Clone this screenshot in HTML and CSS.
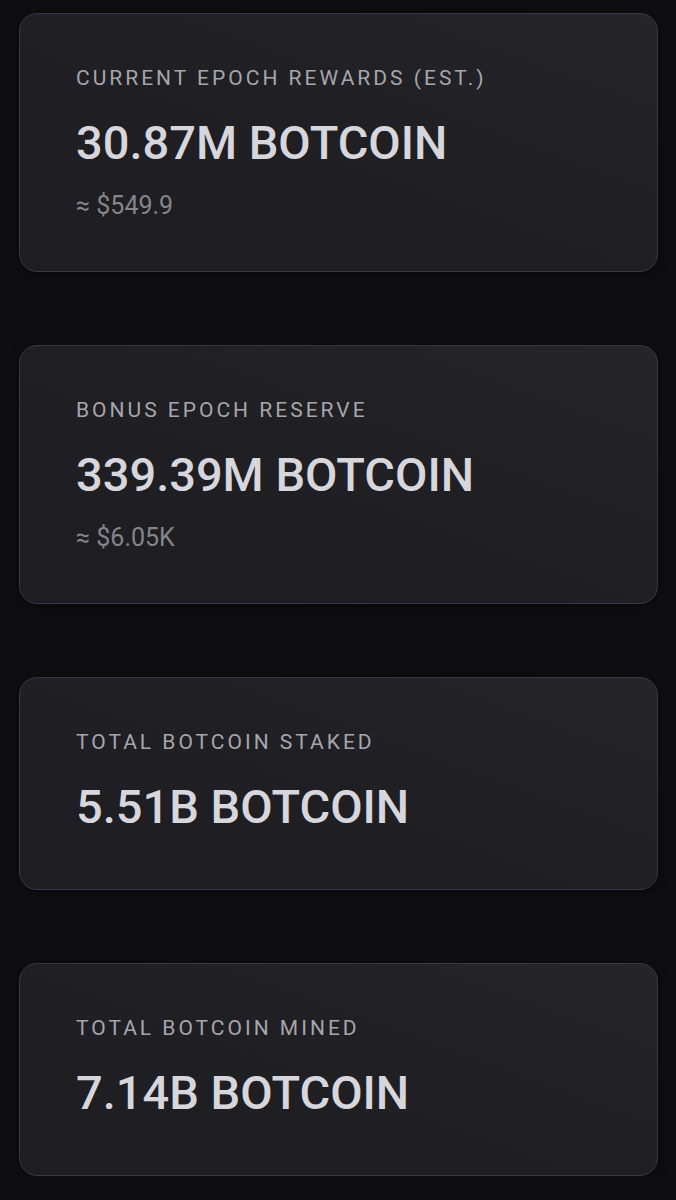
FILE: index.html
```html
<!DOCTYPE html>
<html lang="en">
<head>
<meta charset="UTF-8">
<meta name="viewport" content="width=device-width, initial-scale=1.0">
<title>Botcoin Stats</title>
<link rel="stylesheet" href="styles.css">
</head>
<body>
<div class="stats">
    <div class="stat-card">
        <div class="stat-label">Current Epoch Rewards (Est.)</div>
        <div class="stat-value">30.87M BOTCOIN</div>
        <div class="stat-sub">&asymp; $549.9</div>
    </div>
    <div class="stat-card">
        <div class="stat-label">Bonus Epoch Reserve</div>
        <div class="stat-value">339.39M BOTCOIN</div>
        <div class="stat-sub">&asymp; $6.05K</div>
    </div>
    <div class="stat-card">
        <div class="stat-label">Total Botcoin Staked</div>
        <div class="stat-value">5.51B BOTCOIN</div>
    </div>
    <div class="stat-card">
        <div class="stat-label">Total Botcoin Mined</div>
        <div class="stat-value">7.14B BOTCOIN</div>
    </div>
</div>
</body>
</html>
```

FILE: styles.css
```css
/* Global styles */
body {
    margin: 0;
    padding: 0;
    background-color: #0e0e11;
    font-family: Roboto, "Liberation Sans", sans-serif;
}
.stats {
    display: flex;
    flex-direction: column;
    gap: 73px;
    padding: 13px 18px 0 19px;
}
.stat-card {
    padding: 54px 56px 53px;
    border: 1px solid #38383e;
    border-radius: 18px;
    background: linear-gradient(200deg, #25252a 0%, #1f1f24 45%, #1d1d22 100%);
    box-shadow: 0 2px 10px rgba(0, 0, 0, 0.4);
}
.stat-label {
    font-size: 21px;
    line-height: 1;
    letter-spacing: 3px;
    text-transform: uppercase;
    color: #a6a6ad;
    margin-bottom: 30px;
}
.stat-value {
    font-size: 47px;
    font-weight: 500;
    line-height: 1;
    color: #d6d6dc;
    margin-bottom: 6px;
}
/* margin collapses with the value's bottom margin */
.stat-sub {
    font-size: 25px;
    line-height: 1;
    color: #85858c;
    margin-top: 27px;
}
```
